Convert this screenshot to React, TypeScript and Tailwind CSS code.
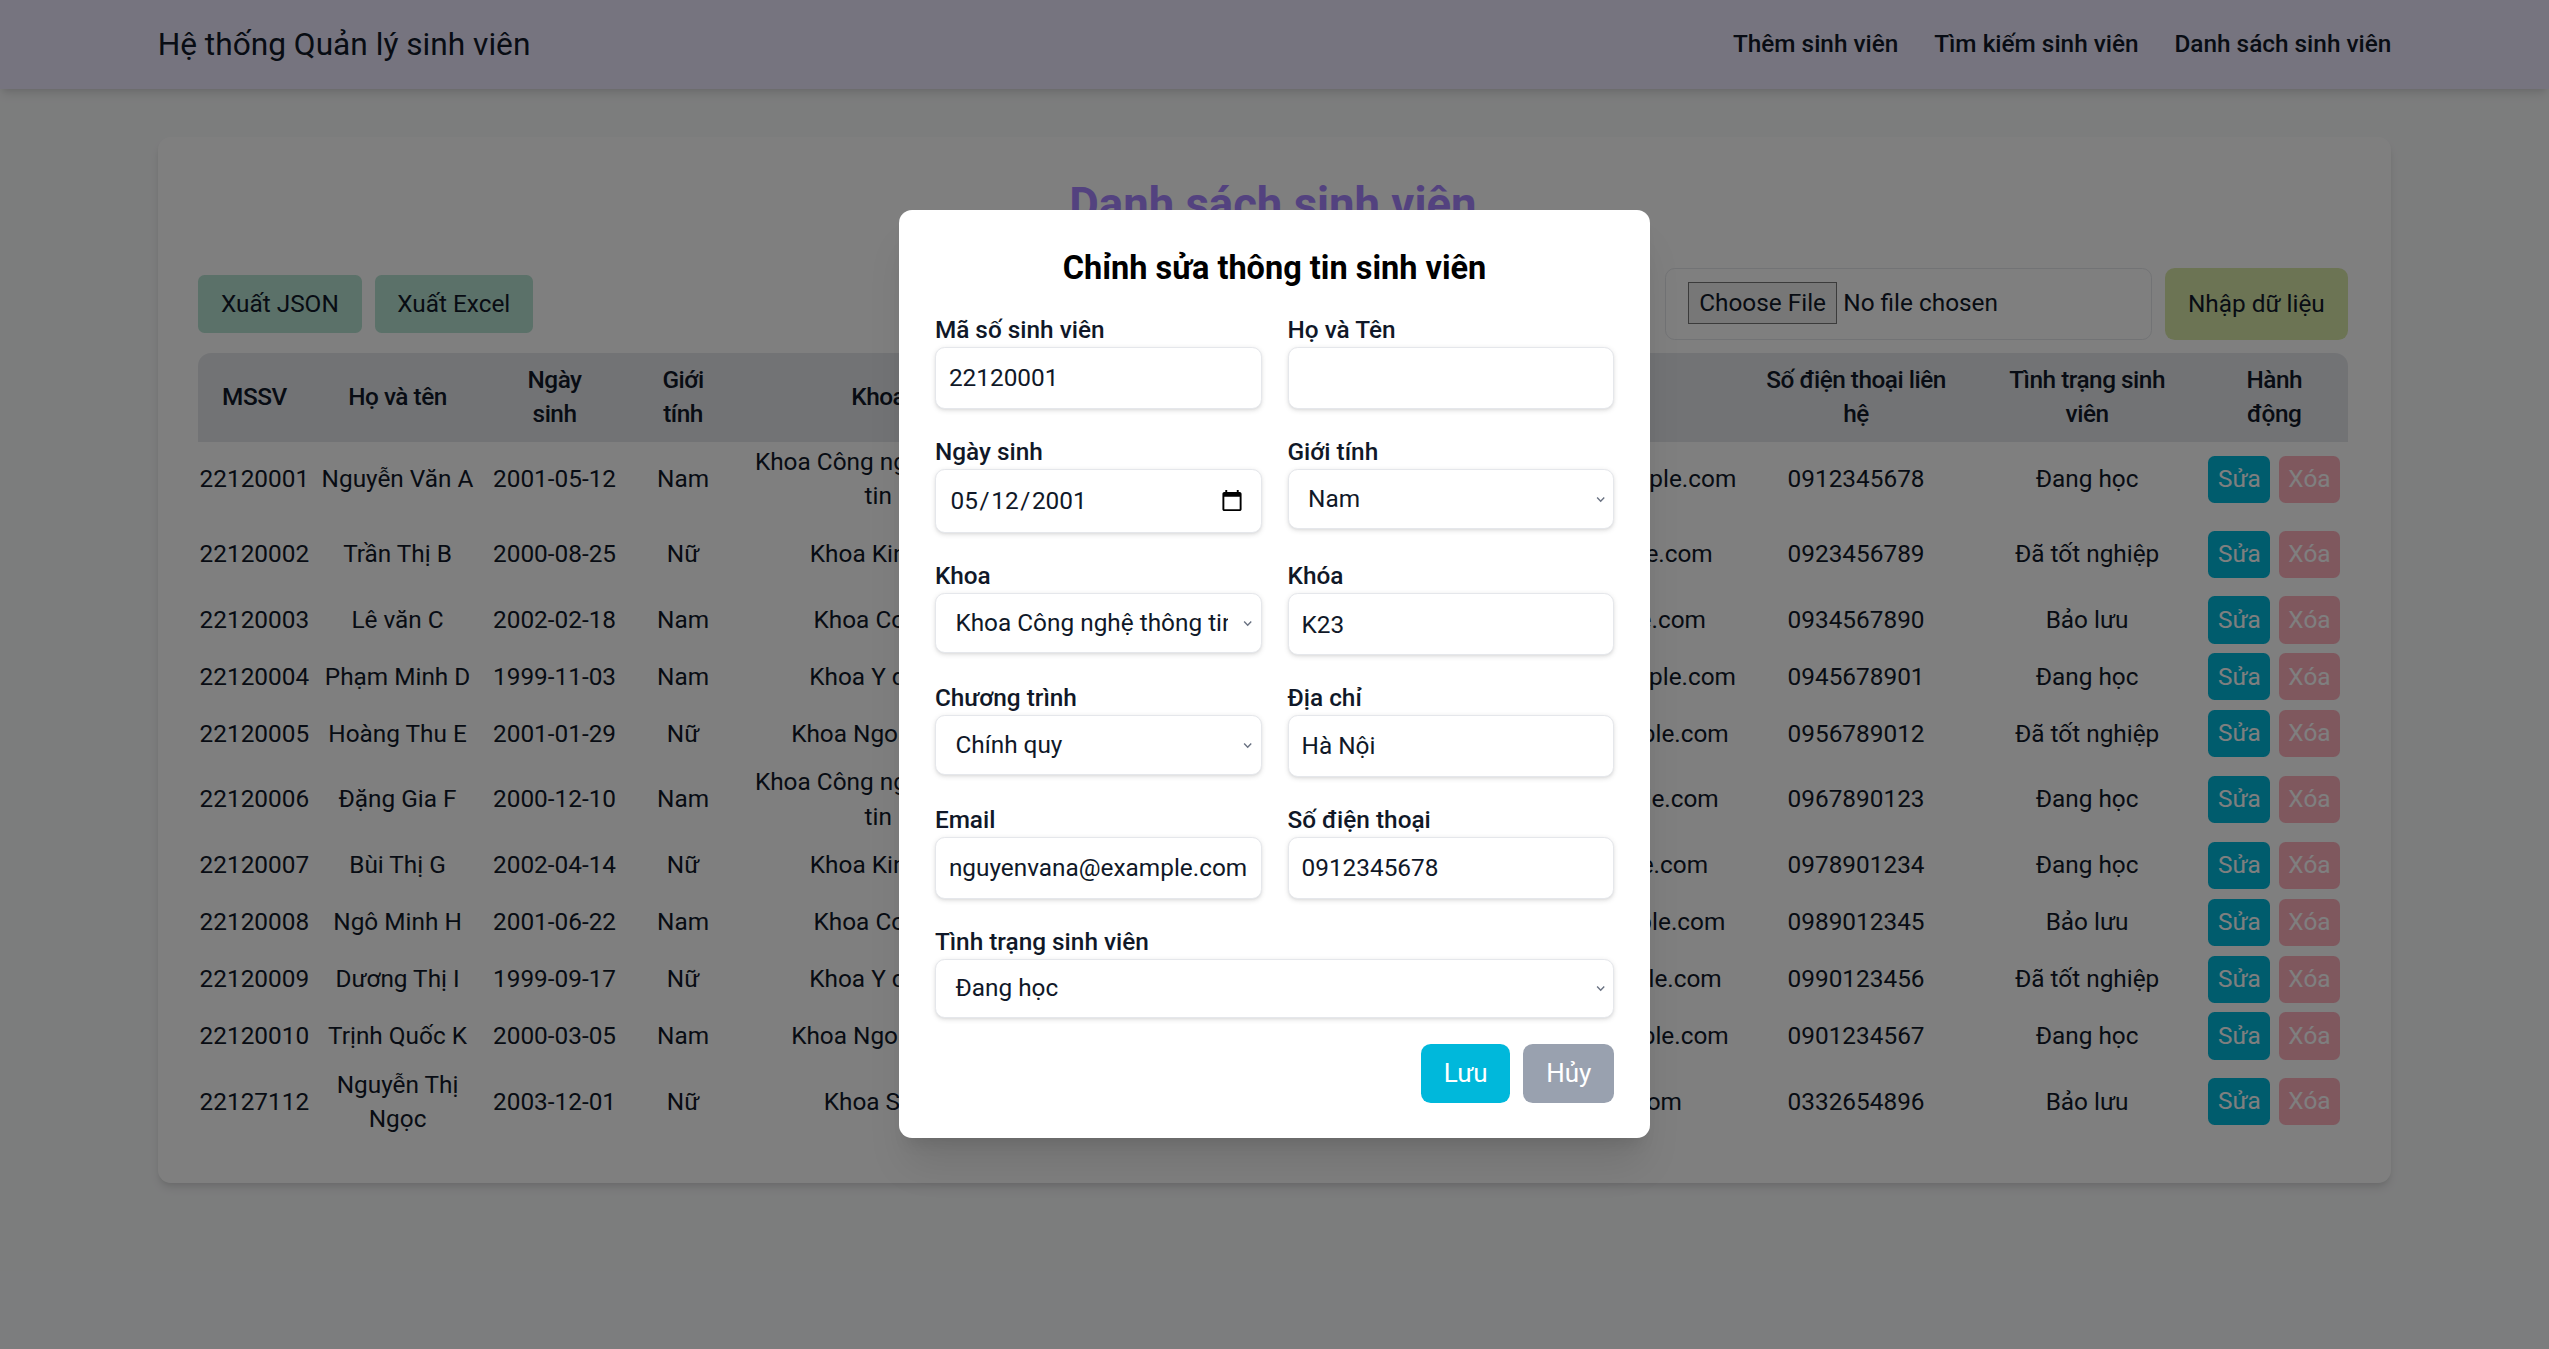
import React from 'react';

type Student = {
  mssv: string;
  name: string;
  dob: string;
  gender: string;
  faculty: string;
  course: string;
  program: string;
  address: string;
  email: string;
  phone: string;
  status: string;
};

const students: Student[] = [
  { mssv: '22120001', name: 'Nguyễn Văn A', dob: '2001-05-12', gender: 'Nam', faculty: 'Khoa Công nghệ thông tin', course: 'K23', program: 'Chính quy', address: 'Hà Nội', email: 'nguyenvana@example.com', phone: '0912345678', status: 'Đang học' },
  { mssv: '22120002', name: 'Trần Thị B', dob: '2000-08-25', gender: 'Nữ', faculty: 'Khoa Kinh tế', course: 'K22', program: 'Chất lượng cao', address: 'TP. Hồ Chí Minh', email: 'tranthib@example.com', phone: '0923456789', status: 'Đã tốt nghiệp' },
  { mssv: '22120003', name: 'Lê văn C', dob: '2002-02-18', gender: 'Nam', faculty: 'Khoa Cơ khí', course: 'K24', program: 'Chính quy', address: 'Đà Nẵng', email: 'levanc@example.com', phone: '0934567890', status: 'Bảo lưu' },
  { mssv: '22120004', name: 'Phạm Minh D', dob: '1999-11-03', gender: 'Nam', faculty: 'Khoa Y dược', course: 'K21', program: 'Chính quy', address: 'Huế', email: 'phamminhd@example.com', phone: '0945678901', status: 'Đang học' },
  { mssv: '22120005', name: 'Hoàng Thu E', dob: '2001-01-29', gender: 'Nữ', faculty: 'Khoa Ngoại ngữ', course: 'K23', program: 'Chính quy', address: 'Cần Thơ', email: 'hoangthue@example.com', phone: '0956789012', status: 'Đã tốt nghiệp' },
  { mssv: '22120006', name: 'Đặng Gia F', dob: '2000-12-10', gender: 'Nam', faculty: 'Khoa Công nghệ thông tin', course: 'K22', program: 'Chính quy', address: 'Hải Phòng', email: 'danggiaf@example.com', phone: '0967890123', status: 'Đang học' },
  { mssv: '22120007', name: 'Bùi Thị G', dob: '2002-04-14', gender: 'Nữ', faculty: 'Khoa Kinh tế', course: 'K24', program: 'Chính quy', address: 'Nha Trang', email: 'buithig@example.com', phone: '0978901234', status: 'Đang học' },
  { mssv: '22120008', name: 'Ngô Minh H', dob: '2001-06-22', gender: 'Nam', faculty: 'Khoa Cơ khí', course: 'K23', program: 'Chính quy', address: 'Vinh', email: 'ngominhh@example.com', phone: '0989012345', status: 'Bảo lưu' },
  { mssv: '22120009', name: 'Dương Thị I', dob: '1999-09-17', gender: 'Nữ', faculty: 'Khoa Y dược', course: 'K21', program: 'Chính quy', address: 'Hà Nội', email: 'duongthii@example.com', phone: '0990123456', status: 'Đã tốt nghiệp' },
  { mssv: '22120010', name: 'Trịnh Quốc K', dob: '2000-03-05', gender: 'Nam', faculty: 'Khoa Ngoại ngữ', course: 'K22', program: 'Chính quy', address: 'Đà Lạt', email: 'trinhquock@example.com', phone: '0901234567', status: 'Đang học' },
  { mssv: '22127112', name: 'Nguyễn Thị Ngọc', dob: '2003-12-01', gender: 'Nữ', faculty: 'Khoa Sinh', course: 'K22', program: 'Chính quy', address: 'Hà Nội', email: 'ngoc@gmail.com', phone: '0332654896', status: 'Bảo lưu' },
];

const headers = [
  'MSSV',
  'Họ và tên',
  'Ngày sinh',
  'Giới tính',
  'Khoa',
  'Khóa',
  'Chương trình',
  'Địa chỉ',
  'Email',
  'Số điện thoại liên hệ',
  'Tình trạng sinh viên',
  'Hành động',
];

const inputClass = 'h-[38px] w-full rounded-md border border-gray-200 bg-white px-2 shadow-sm outline-none';
const selectClass = 'w-full appearance-none rounded-md border border-gray-200 bg-white pl-3 pr-5 shadow-sm outline-none';

const Field: React.FC<{ label: string; className?: string; children: React.ReactNode }> = ({ label, className, children }) => (
  <div className={className}>
    <label className="block font-medium leading-[21px]">{label}</label>
    {children}
  </div>
);

const Select: React.FC<{ value: string; options: string[]; height?: string }> = ({ value, options, height = 'h-[37px]' }) => (
  <div className="relative">
    <select className={`${selectClass} ${height}`} defaultValue={value}>
      {options.map((o) => (
        <option key={o}>{o}</option>
      ))}
    </select>
    <svg
      className="pointer-events-none absolute top-1/2 right-[5px] h-[7px] w-[7px] -translate-y-1/2 text-gray-500"
      viewBox="0 0 8 8"
      fill="none"
      stroke="currentColor"
      strokeWidth={1}
    >
      <path d="M1.5 3l2.5 2.5L6.5 3" />
    </svg>
  </div>
);

const EditModal: React.FC = () => (
  <div className="absolute inset-0 flex items-center justify-center bg-black/50">
    <div className="w-[462px] rounded-lg bg-white p-[22px] shadow-xl">
      <h2 className="mb-[13px] text-center text-xl leading-7 font-bold text-black">Chỉnh sửa thông tin sinh viên</h2>
      <div className="grid grid-cols-2 gap-4">
        <Field label="Mã số sinh viên">
          <input className={inputClass} defaultValue="22120001" />
        </Field>
        <Field label="Họ và Tên">
          <input className={inputClass} defaultValue="" />
        </Field>
        <Field label="Ngày sinh">
          <input type="date" className="h-[39.5px] w-full rounded-md border border-gray-200 bg-white px-2 shadow-sm outline-none" defaultValue="2001-05-12" />
        </Field>
        <Field label="Giới tính">
          <Select value="Nam" options={['Nam', 'Nữ']} />
        </Field>
        <Field label="Khoa">
          <Select value="Khoa Công nghệ thông tin" options={['Khoa Công nghệ thông tin', 'Khoa Kinh tế']} />
        </Field>
        <Field label="Khóa">
          <input className={inputClass} defaultValue="K23" />
        </Field>
        <Field label="Chương trình">
          <Select value="Chính quy" options={['Chính quy', 'Chất lượng cao']} />
        </Field>
        <Field label="Địa chỉ">
          <input className={inputClass} defaultValue="Hà Nội" />
        </Field>
        <Field label="Email">
          <input className={inputClass} defaultValue="nguyenvana@example.com" />
        </Field>
        <Field label="Số điện thoại">
          <input className={inputClass} defaultValue="0912345678" />
        </Field>
        <Field label="Tình trạng sinh viên" className="col-span-2">
          <Select value="Đang học" options={['Đang học', 'Đã tốt nghiệp', 'Bảo lưu']} height="h-[36.5px]" />
        </Field>
      </div>
      <div className="mt-4 flex justify-end gap-2">
        <button className="h-9 rounded-md bg-cyan-500 px-3.5 text-base text-white">Lưu</button>
        <button className="h-9 rounded-md bg-gray-400 px-3.5 text-base text-white">Hủy</button>
      </div>
    </div>
  </div>
);

export default function App() {
  return (
    <div className="relative h-[830px] overflow-hidden bg-gray-50 font-['Segoe_UI',Roboto,'Noto_Sans',sans-serif] text-[15px] text-gray-900 [zoom:1.625]">
      <nav className="flex h-[55px] items-center justify-between bg-violet-100 px-[97px] shadow-md">
        <span className="text-[19.5px]">Hệ thống Quản lý sinh viên</span>
        <div className="flex gap-[22px] font-medium">
          <a>Thêm sinh viên</a>
          <a>Tìm kiếm sinh viên</a>
          <a>Danh sách sinh viên</a>
        </div>
      </nav>

      <main className="px-[97px] pt-[29px]">
        <div className="rounded-lg bg-white pt-6 pr-[27px] pb-[27px] pl-[25px] shadow-md">
          <h1 className="mb-[21px] text-center text-[28px] leading-9 font-bold text-violet-400">Danh sách sinh viên</h1>

          <div className="mb-2 flex items-center justify-between">
            <div className="flex gap-2">
              <button className="h-9 rounded bg-[#b6e2d2] px-3.5">Xuất JSON</button>
              <button className="h-9 rounded bg-[#b6e2d2] px-3.5">Xuất Excel</button>
            </div>
            <div className="flex gap-2">
              <input
                type="file"
                className="w-[300px] rounded-md border border-gray-200 px-3.5 py-2 file:mr-1 file:border file:border-[#767676] file:bg-[#efefef] file:px-1.5 file:py-px"
              />
              <button className="h-[44px] rounded-md bg-[#d9e8a9] px-3.5">Nhập dữ liệu</button>
            </div>
          </div>

          <div className="overflow-hidden rounded-lg">
            <table className="w-full table-fixed border-collapse text-center">
              <colgroup>
                <col className="w-[69px]" />
                <col className="w-[107px]" />
                <col className="w-[86px]" />
                <col className="w-[72px]" />
                <col className="w-[168px]" />
                <col className="w-[60px]" />
                <col className="w-[106px]" />
                <col className="w-[92px]" />
                <col className="w-[187px]" />
                <col className="w-[144px]" />
                <col className="w-[140px]" />
                <col className="w-[90px]" />
              </colgroup>
              <thead>
                <tr className="bg-gray-200">
                  {headers.map((h) => (
                    <th key={h} className="px-3.5 py-[6.5px] leading-[21px] font-medium tracking-[-0.3px]">
                      {h}
                    </th>
                  ))}
                </tr>
              </thead>
              <tbody>
                {students.map((s) => (
                  <tr key={s.mssv}>
                    <td className="px-0 py-0.5 leading-[21px]">{s.mssv}</td>
                    <td className="px-0.5 py-0.5 leading-[21px]">{s.name}</td>
                    <td className="px-0.5 py-0.5 leading-[21px]">{s.dob}</td>
                    <td className="px-0.5 py-0.5 leading-[21px]">{s.gender}</td>
                    <td className="px-0.5 py-0.5 leading-[21px]">{s.faculty}</td>
                    <td className="px-0.5 py-0.5 leading-[21px]">{s.course}</td>
                    <td className="px-0.5 py-0.5 leading-[21px]">{s.program}</td>
                    <td className="px-0.5 py-0.5 leading-[21px]">{s.address}</td>
                    <td className="px-0.5 py-0.5 leading-[21px]">{s.email}</td>
                    <td className="px-0.5 py-0.5 leading-[21px]">{s.phone}</td>
                    <td className="px-0.5 py-0.5 leading-[21px]">{s.status}</td>
                    <td className="px-0.5 py-0.5">
                      <div className="flex justify-center gap-[5px]">
                        <button className="my-px h-[29px] rounded bg-cyan-500 px-1.5 text-white">Sửa</button>
                        <button className="my-px h-[29px] rounded bg-rose-400 px-1.5 text-white opacity-50">Xóa</button>
                      </div>
                    </td>
                  </tr>
                ))}
              </tbody>
            </table>
          </div>
        </div>
      </main>

      <EditModal />
    </div>
  );
}
